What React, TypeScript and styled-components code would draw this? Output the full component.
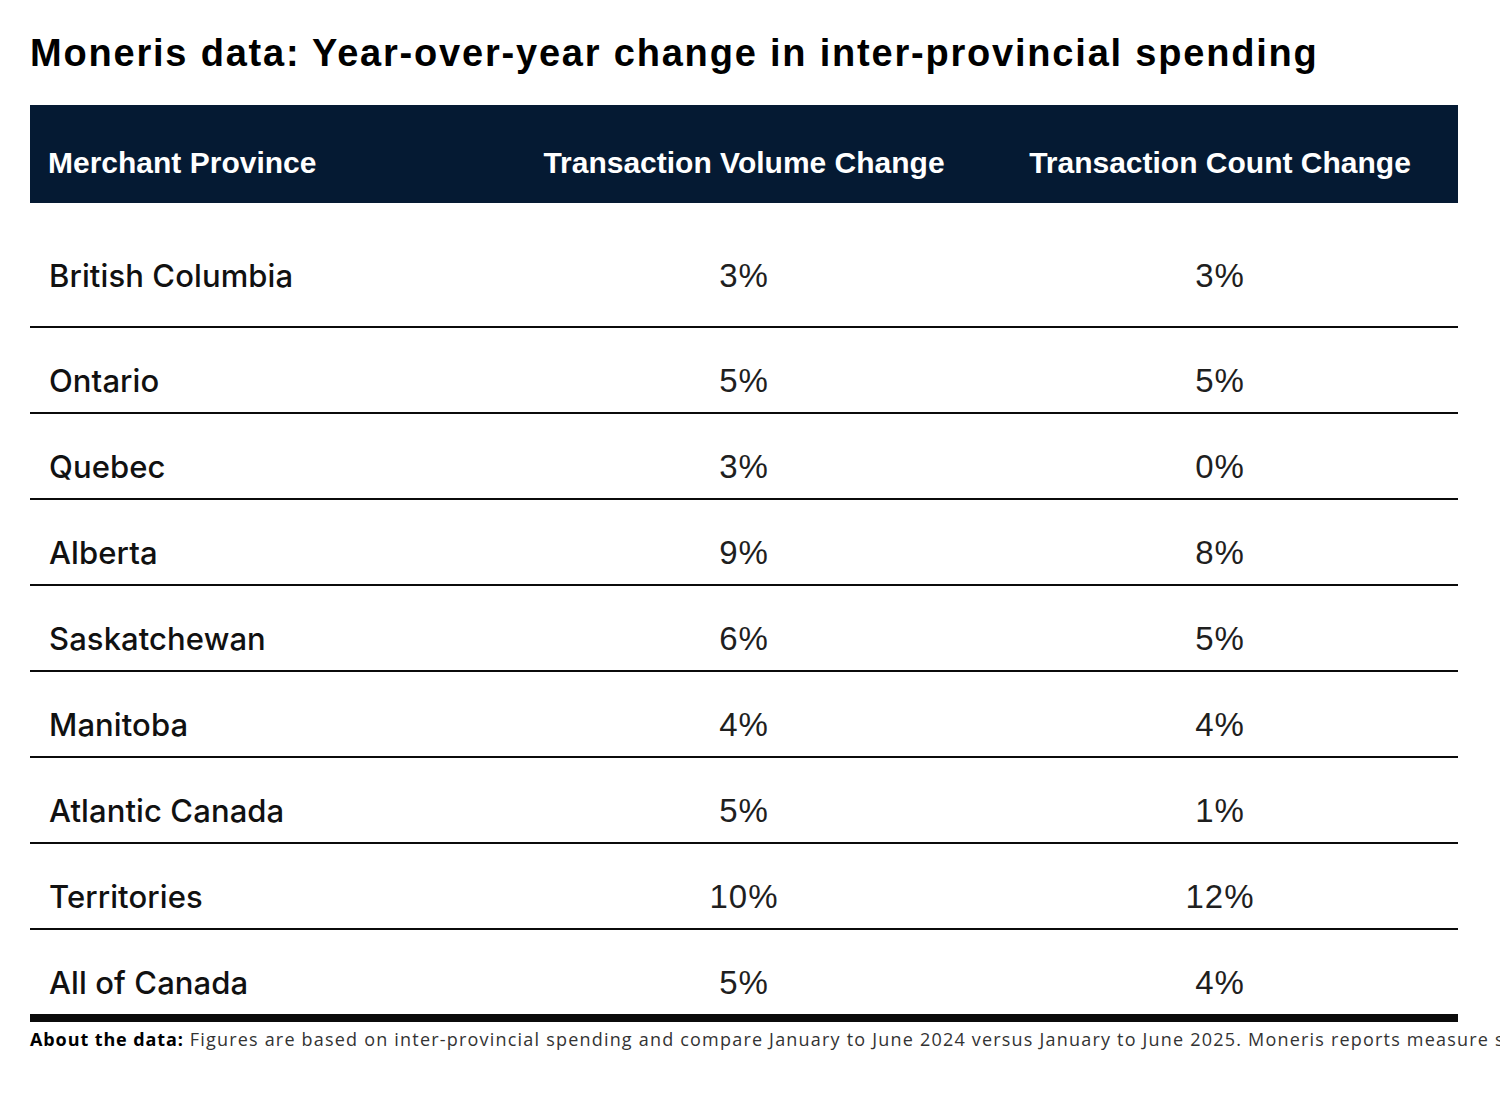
import styled, { createGlobalStyle } from 'styled-components'

const GlobalStyle = createGlobalStyle`
  body {
    margin: 0;
    background: #ffffff;
    overflow: hidden;
  }
`

const Page = styled.main`
  padding: 34px 42px 20px 30px;
  width: 1500px;
  box-sizing: border-box;
  color: #111;
  overflow: hidden;
`

const Title = styled.h1`
  margin: 0 0 33px;
  font-family: 'Liberation Sans', Arial, sans-serif;
  font-size: 38px;
  font-weight: 700;
  letter-spacing: 1.8px;
  line-height: 1;
  color: #000;
  white-space: nowrap;
`

const Table = styled.section`
  display: flex;
  flex-direction: column;
`

const HeaderRow = styled.div`
  display: grid;
  grid-template-columns: repeat(3, 1fr);
  align-items: end;
  height: 98px;
  box-sizing: border-box;
  padding-bottom: 25px;
  background: #051a33;
`

const HeaderCell = styled.div<{ align?: 'left' | 'center' }>`
  font-family: 'Liberation Sans', Arial, sans-serif;
  font-size: 30px;
  font-weight: 700;
  line-height: 1;
  color: #ffffff;
  text-align: ${(p) => p.align ?? 'center'};
  padding-left: ${(p) => (p.align === 'left' ? '18px' : '0')};
  white-space: nowrap;
`

const Row = styled.div<{ first?: boolean; last?: boolean }>`
  display: grid;
  grid-template-columns: repeat(3, 1fr);
  align-items: baseline;
  height: ${(p) => (p.first ? '125px' : p.last ? '92px' : '86px')};
  box-sizing: border-box;
  padding-top: ${(p) => (p.first ? '56px' : '36px')};
  border-bottom: ${(p) => (p.last ? '8px' : '2px')} solid #0b0b0b;
`

const NameCell = styled.div`
  padding-left: 19px;
  font-family: Inter, 'Noto Sans', sans-serif;
  font-size: 31px;
  font-weight: 500;
  letter-spacing: 0.1px;
  line-height: 1;
  color: #111;
  white-space: nowrap;
`

const ValueCell = styled.div`
  text-align: center;
  font-family: 'Liberation Sans', Arial, sans-serif;
  font-size: 33px;
  font-weight: 400;
  letter-spacing: 1px;
  line-height: 1;
  color: #1f1f1f;
`

const Note = styled.p`
  margin: 6px 0 0;
  font-family: 'Open Sans', 'Noto Sans', sans-serif;
  font-size: 18px;
  letter-spacing: 1.2px;
  line-height: 1.3;
  color: #333;
  white-space: nowrap;

  strong {
    color: #000;
    font-weight: 700;
    letter-spacing: 0.9px;
  }
`

const rows = [
  ['British Columbia', '3%', '3%'],
  ['Ontario', '5%', '5%'],
  ['Quebec', '3%', '0%'],
  ['Alberta', '9%', '8%'],
  ['Saskatchewan', '6%', '5%'],
  ['Manitoba', '4%', '4%'],
  ['Atlantic Canada', '5%', '1%'],
  ['Territories', '10%', '12%'],
  ['All of Canada', '5%', '4%']
]

export default function App () {
  return (
    <>
      <GlobalStyle />
      <Page>
        <Title>Moneris data: Year-over-year change in inter-provincial spending</Title>
        <Table>
          <HeaderRow>
            <HeaderCell align="left">Merchant Province</HeaderCell>
            <HeaderCell>Transaction Volume Change</HeaderCell>
            <HeaderCell>Transaction Count Change</HeaderCell>
          </HeaderRow>
          {rows.map(([name, volume, count], i) => (
            <Row key={name} first={i === 0} last={i === rows.length - 1}>
              <NameCell>{name}</NameCell>
              <ValueCell>{volume}</ValueCell>
              <ValueCell>{count}</ValueCell>
            </Row>
          ))}
        </Table>
        <Note>
          <strong>About the data:</strong> Figures are based on inter-provincial
          spending and compare January to June 2024 versus January to June 2025.
          Moneris reports measure spending
        </Note>
      </Page>
    </>
  )
}
